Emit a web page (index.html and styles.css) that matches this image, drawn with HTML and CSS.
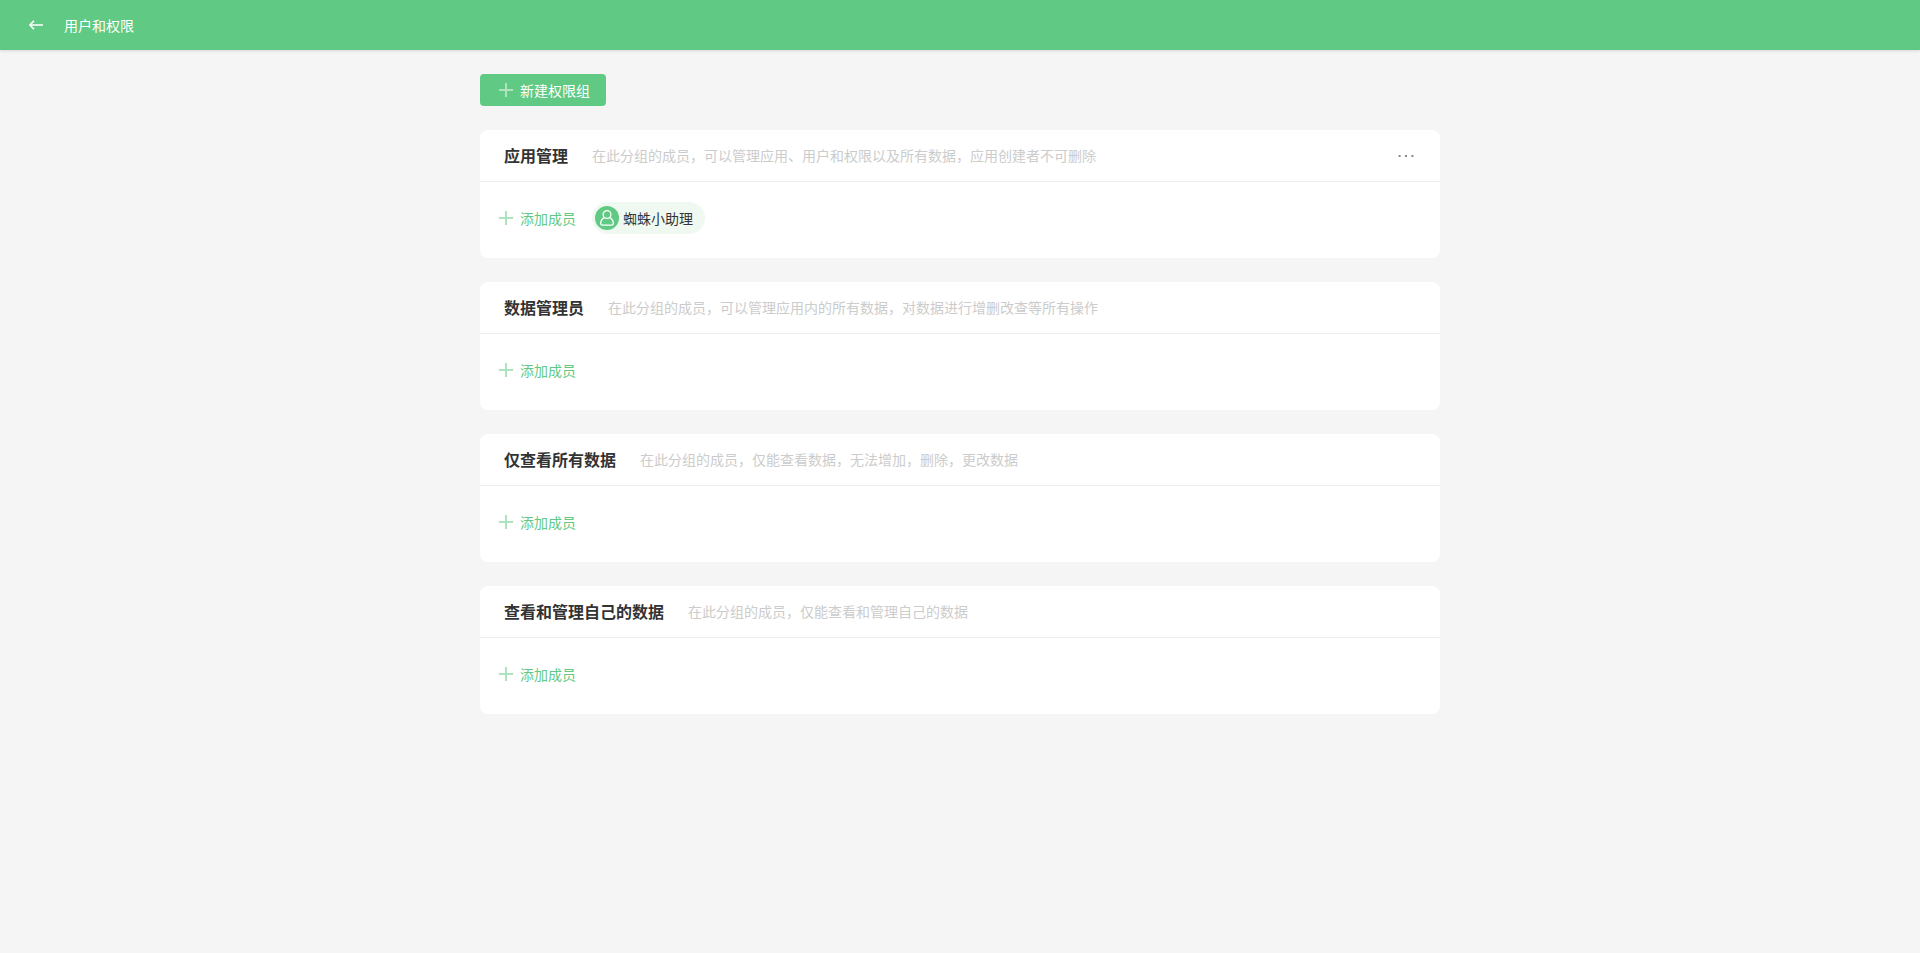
FILE: index.html
```html
<!DOCTYPE html>
<html lang="zh-CN">
<head>
<meta charset="utf-8">
<title>用户和权限</title>
<link rel="stylesheet" href="styles.css">
</head>
<body>
<svg class="symbols" width="0" height="0">
  <symbol id="plus" viewBox="0 0 14 14"><path d="M7 0V14M0 7H14" stroke="currentColor" stroke-width="2"/></symbol>
</svg>
<header class="topbar">
  <svg class="back" width="14" height="10" viewBox="0 0 14 10" fill="none" stroke="currentColor" stroke-width="1.6"><path d="M5 .7.9 5 5 9.3M1 5H14"/></svg>
  <h1 class="topbar-title">用户和权限</h1>
</header>
<main class="content">
  <button class="create"><svg class="plus"><use href="#plus"/></svg><span>新建权限组</span></button>

  <section class="card">
    <div class="card-head">
      <h2 class="card-title">应用管理</h2>
      <p class="card-desc">在此分组的成员，可以管理应用、用户和权限以及所有数据，应用创建者不可删除</p>
      <svg class="more" width="16" height="2" viewBox="0 0 16 2" fill="currentColor"><path d="M.6 0h2v2h-2zM7 0h2v2H7zM13.4 0h2v2h-2z"/></svg>
    </div>
    <div class="card-body">
      <a class="add"><svg class="plus"><use href="#plus"/></svg><span>添加成员</span></a>
      <div class="member">
        <svg class="avatar" width="24" height="24" viewBox="0 0 24 24"><circle class="avatar-bg" cx="12" cy="12" r="12"/><g fill="none" stroke="#fff" stroke-width="1.3"><circle cx="12" cy="8.500" r="3.900"/><path d="M9.600 11.700C7.300 12.600 5.700 14.800 5.700 17.400c0 1.200.5 1.700 1.700 1.700h9.200c1.200 0 1.700-.5 1.700-1.700 0-2.600-1.600-4.800-3.900-5.700"/></g></svg>
        <span>蜘蛛小助理</span>
      </div>
    </div>
  </section>

  <section class="card">
    <div class="card-head">
      <h2 class="card-title">数据管理员</h2>
      <p class="card-desc">在此分组的成员，可以管理应用内的所有数据，对数据进行增删改查等所有操作</p>
    </div>
    <div class="card-body"><a class="add"><svg class="plus"><use href="#plus"/></svg><span>添加成员</span></a></div>
  </section>

  <section class="card">
    <div class="card-head">
      <h2 class="card-title">仅查看所有数据</h2>
      <p class="card-desc">在此分组的成员，仅能查看数据，无法增加，删除，更改数据</p>
    </div>
    <div class="card-body"><a class="add"><svg class="plus"><use href="#plus"/></svg><span>添加成员</span></a></div>
  </section>

  <section class="card">
    <div class="card-head">
      <h2 class="card-title">查看和管理自己的数据</h2>
      <p class="card-desc">在此分组的成员，仅能查看和管理自己的数据</p>
    </div>
    <div class="card-body"><a class="add"><svg class="plus"><use href="#plus"/></svg><span>添加成员</span></a></div>
  </section>
</main>
</body>
</html>
```
FILE: styles.css
```css
* { box-sizing: border-box; }
body {
  margin: 0;
  min-height: 100vh;
  background: #f5f5f5;
  color: #333;
  font: 14px/20px "Noto Sans CJK SC", sans-serif;
}
h1, h2, p { margin: 0; }
svg { display: block; flex: none; }
.symbols { position: absolute; }
.topbar {
  height: 50px;
  padding-left: 29px;
  display: flex;
  align-items: center;
  gap: 21px;
  background: #60c983;
  color: #fff;
  box-shadow: 0 1px 3px rgba(0, 0, 0, .12);
}
.topbar-title { font-size: 14px; font-weight: 400; }
.content {
  width: 960px;
  margin: 0 auto;
  padding-top: 24px;
  display: flex;
  flex-direction: column;
  align-items: flex-start;
  gap: 24px;
}
.create {
  width: 126px;
  height: 32px;
  padding: 0 0 0 19px;
  display: flex;
  align-items: center;
  gap: 7px;
  border: 0;
  border-radius: 4px;
  background: #60c983;
  color: #fff;
  font: inherit;
}
.plus { width: 14px; height: 14px; opacity: .5; }
.card {
  width: 100%;
  height: 128px;
  background: #fff;
  border-radius: 8px;
}
.card-head {
  height: 52px;
  padding: 0 26px 0 24px;
  display: flex;
  align-items: center;
  gap: 24px;
  border-bottom: 1px solid #eee;
}
.card-title { font-size: 16px; font-weight: 700; color: #333; padding-bottom: 2px; }
.card-desc { color: #ccc; padding-bottom: 1px; }
.more { margin-left: auto; color: #888; }
.card-body {
  padding: 20px 19px;
  display: flex;
  align-items: center;
  gap: 16px;
}
.add {
  height: 32px;
  display: flex;
  align-items: center;
  gap: 7px;
  color: #60c983;
}
.member {
  width: 113px;
  height: 32px;
  padding-left: 3px;
  display: flex;
  align-items: center;
  gap: 4px;
  border-radius: 16px;
  background: #eff9f2;
}
.avatar-bg { fill: #60c983; }
```
